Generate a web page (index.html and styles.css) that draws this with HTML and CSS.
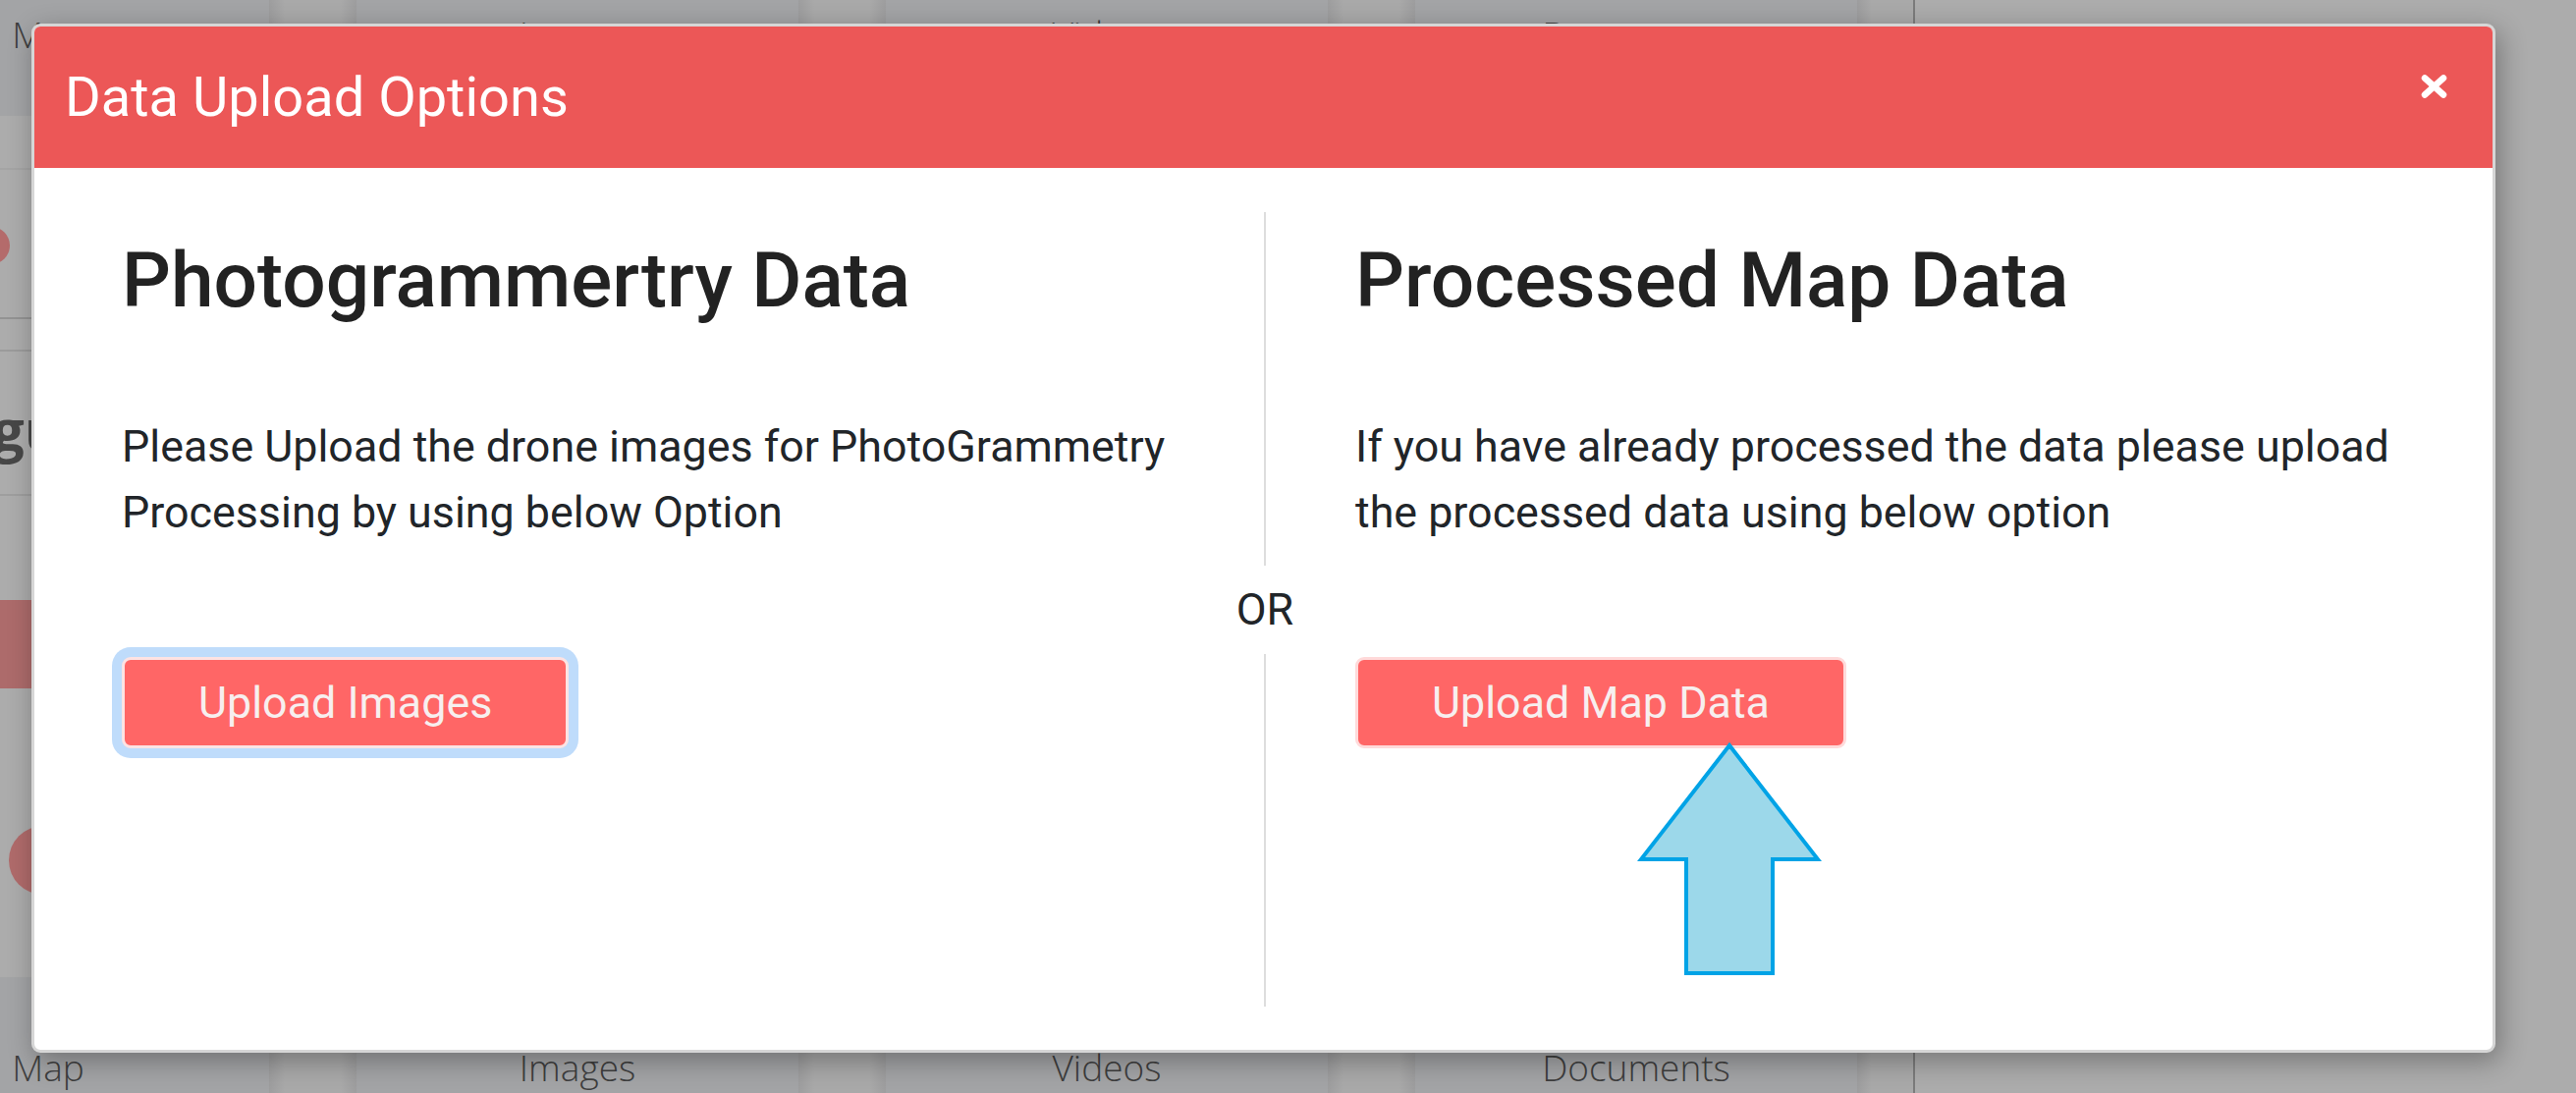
FILE: index.html
```html
<!DOCTYPE html>
<html lang="en">
<head>
<meta charset="utf-8">
<title>Data Upload Options</title>
<link rel="stylesheet" href="styles.css">
</head>
<body>
<div class="page">
  <section class="panel">
    <nav class="tabs tabs-top">
      <div class="tab tab-first">Map</div>
      <div class="tab-gap"></div>
      <div class="tab">Images</div>
      <div class="tab-gap"></div>
      <div class="tab">Videos</div>
      <div class="tab-gap"></div>
      <div class="tab">Documents</div>
      <div class="tab-gap tab-gap-end"></div>
    </nav>
    <div class="panel-body">
      <div class="strip">
        <div class="strip-head"></div>
        <div class="strip-avatar"></div>
        <div class="strip-rule strip-rule-a"></div>
        <div class="strip-rule strip-rule-b"></div>
        <div class="strip-title">gu</div>
        <div class="strip-rule strip-rule-c"></div>
        <div class="strip-block"></div>
        <div class="strip-icon"></div>
      </div>
    </div>
    <nav class="tabs tabs-bottom">
      <div class="tab tab-first">Map</div>
      <div class="tab-gap"></div>
      <div class="tab">Images</div>
      <div class="tab-gap"></div>
      <div class="tab">Videos</div>
      <div class="tab-gap"></div>
      <div class="tab">Documents</div>
      <div class="tab-gap tab-gap-end"></div>
    </nav>
  </section>
  <aside class="side"></aside>
</div>

<div class="modal">
  <header class="modal-header">
    <h5 class="modal-title">Data Upload Options</h5>
    <button class="modal-close" aria-label="Close">
      <svg width="27" height="24" viewBox="0 0 27 24"><path d="M4 3.5 L23 20.5 M23 3.5 L4 20.5" stroke="#ffffff" stroke-width="6.5" stroke-linecap="round" fill="none"/></svg>
    </button>
  </header>
  <div class="modal-body">
    <div class="col col-left">
      <h3 class="col-title">Photogrammertry Data</h3>
      <p class="col-text">Please Upload the drone images for PhotoGrammetry Processing by using below Option</p>
      <button class="btn btn-focus">Upload Images</button>
    </div>
    <div class="divider">
      <div class="divider-line"></div>
      <div class="divider-or">OR</div>
      <div class="divider-line"></div>
    </div>
    <div class="col col-right">
      <h3 class="col-title">Processed Map Data</h3>
      <p class="col-text">If you have already processed the data please upload the processed data using below option</p>
      <button class="btn">Upload Map Data</button>
      <svg class="arrow" width="188" height="240" viewBox="0 0 188 240"><polygon points="94,4 184,120 138,120 138,236 50,236 50,120 4,120" fill="#9cd8ea" stroke="#00a3e6" stroke-width="4" stroke-linejoin="miter"/></svg>
    </div>
  </div>
</div>
</body>
</html>
```

FILE: styles.css
```css
* { box-sizing: border-box; }

html, body {
  margin: 0;
  padding: 0;
}

body {
  width: 2623px;
  height: 1113px;
  overflow: hidden;
  position: relative;
  background: #acacac;
  font-family: Roboto, "Liberation Sans", sans-serif;
}

/* ---------- page behind the backdrop ---------- */
.page {
  display: flex;
  height: 1113px;
}

.panel {
  width: 1950px;
  flex: none;
  display: flex;
  flex-direction: column;
  border-right: 2px solid #7c7c7c;
  overflow: hidden;
}

.side {
  flex: 1;
  background: #acacac;
}

.tabs {
  display: flex;
  height: 118px;
  margin-left: -176px;
  flex: none;
  font-family: "Open Sans", "DejaVu Sans", sans-serif;
  font-weight: 300;
  font-size: 37px;
  line-height: 1.2;
  color: #3e3e3e;
}

.tabs-top { padding-top: 13px; }
.tabs-bottom { padding-top: 70px; }

.tab {
  width: 450px;
  flex: none;
  text-align: center;
  background: #a3a4a6;
}

.tabs-top .tab {
  margin-top: -13px;
  padding-top: 13px;
}

.tabs-bottom .tab {
  margin-top: -70px;
  padding-top: 70px;
}

.tab-gap {
  width: 89px;
  flex: none;
  background: linear-gradient(to right, #9d9d9e, #a9a9a9 18%, #a9a9a9 82%, #9d9d9e);
}

.tabs-top .tab-gap { margin-top: -13px; }
.tabs-bottom .tab-gap { margin-top: -70px; }

.tab-gap-end {
  width: 59px;
  background: linear-gradient(to right, #9d9d9e, #a9a9a9 25%);
}

.panel-body {
  flex: 1;
  background: #acacac;
}

.strip {
  width: 200px;
  display: flex;
  flex-direction: column;
}

.strip-head {
  height: 55px;
  border-bottom: 2px solid #a4a4a4;
}

.strip-avatar {
  width: 38px;
  height: 38px;
  border-radius: 50%;
  background: #b46b6b;
  margin: 58px 0 0 -28px;
}

.strip-rule {
  height: 2px;
  background: #939393;
}

.strip-rule-a { margin-top: 54px; }
.strip-rule-b { margin-top: 31px; background: #9b9b9b; }

.strip-title {
  margin: 50px 0 0 -8px;
  font-family: "Open Sans", "DejaVu Sans", sans-serif;
  font-weight: 700;
  font-size: 58px;
  line-height: 1;
  color: #474747;
  height: 60px;
}

.strip-rule-c { margin-top: 35px; background: #9e9e9e; }

.strip-block {
  height: 90px;
  margin-top: 106px;
  background: #ad6b6b;
}

.strip-icon {
  width: 70px;
  height: 70px;
  border-radius: 50%;
  background: #b06b6b;
  margin: 140px 0 0 9px;
}

/* ---------- modal ---------- */
.modal {
  position: absolute;
  left: 32px;
  top: 24px;
  width: 2509px;
  height: 1048px;
  border: 3px solid #d6d6d6;
  border-radius: 9px;
  background: #ffffff;
  box-shadow: 4px 8px 28px rgba(0, 0, 0, 0.32);
  display: flex;
  flex-direction: column;
}

.modal-header {
  height: 144px;
  flex: none;
  background: #ec5757;
  border-radius: 6px 6px 0 0;
  display: flex;
  justify-content: space-between;
  align-items: flex-start;
  padding: 0 46px 0 31px;
}

.modal-title {
  margin: 30px 0 0;
  font-size: 56px;
  font-weight: 400;
  line-height: 84px;
  color: #ffffff;
}

.modal-close {
  margin-top: 49px;
  padding: 0;
  border: 0;
  background: transparent;
  width: 27px;
  height: 24px;
  display: block;
}

.modal-close svg { display: block; }

.modal-body {
  flex: 1;
  display: grid;
  grid-template-columns: 1180px 56px 1fr;
  padding: 45px 45px 44px;
}

.col {
  padding-top: 22px;
  color: #212529;
}

.col-left { padding-left: 44px; }

.col-right {
  padding-left: 64px;
  position: relative;
}

.col-title {
  margin: 0 0 89px;
  font-size: 78.4px;
  font-weight: 500;
  line-height: 1.2;
  color: #222222;
}

.col-text {
  margin: 0;
  font-size: 44.8px;
  line-height: 67.2px;
}

.btn {
  display: inline-block;
  margin-top: 113.6px;
  padding: 10px 75px;
  border: 3px solid #ffdada;
  border-radius: 9px;
  background: #ff6666;
  color: #f7efef;
  font-family: Roboto, "Liberation Sans", sans-serif;
  font-size: 44.8px;
  line-height: 67.2px;
}

.btn-focus {
  border-color: #fde3e3;
  box-shadow: 0 0 0 10px #bfdcfb;
}

.divider {
  display: flex;
  flex-direction: column;
  align-items: center;
}

.divider-line {
  flex: 1;
  width: 2px;
  background: #dddddd;
}

.divider-or {
  height: 90px;
  display: flex;
  align-items: center;
  font-size: 44.8px;
  line-height: 67.2px;
  color: #212529;
}

.arrow {
  position: absolute;
  left: 351px;
  top: 539px;
  display: block;
}
```
